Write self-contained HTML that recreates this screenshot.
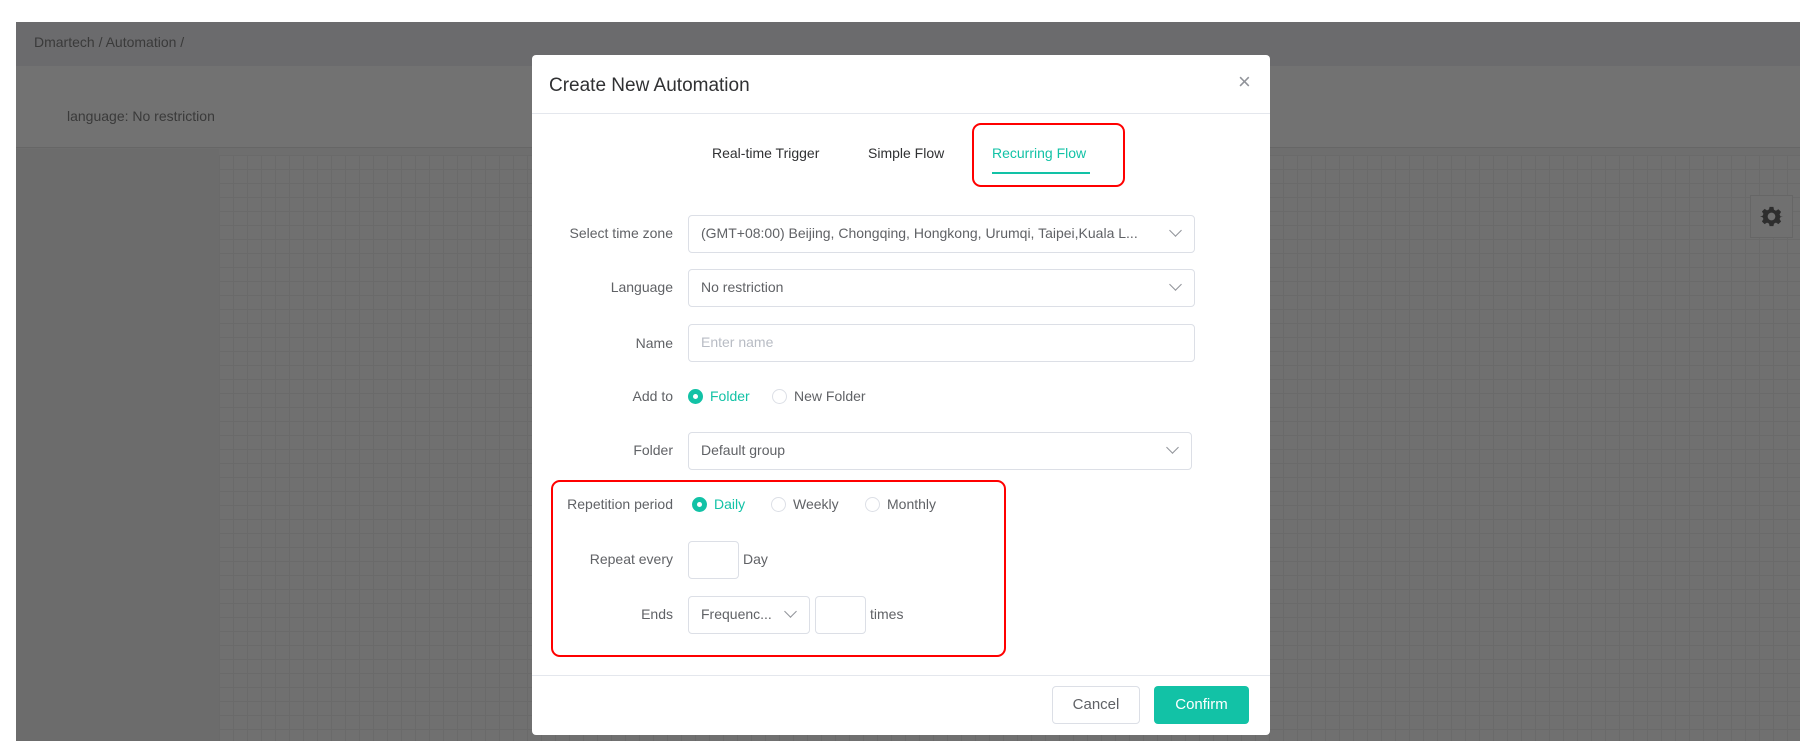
<!DOCTYPE html>
<html><head><meta charset="utf-8"><style>
*{margin:0;padding:0;box-sizing:border-box}
body{width:1810px;height:756px;background:#fff;position:relative;overflow:hidden;font-family:"Liberation Sans",Arial,sans-serif;font-size:14px;color:#606266}
.a{position:absolute}
.grid{background-color:#707070;background-image:linear-gradient(#6a6a6a 1px,transparent 1px),linear-gradient(90deg,#6a6a6a 1px,transparent 1px);background-size:14px 14px}
.lbl{position:absolute;right:1137px;text-align:right;white-space:nowrap;line-height:20px}
.inp{position:absolute;border:1px solid #dcdfe6;border-radius:4px;background:#fff;line-height:35px;padding-left:12px;color:#606266;white-space:nowrap;overflow:hidden}
.chev{position:absolute;width:9px;height:9px;border-right:1.5px solid #909399;border-bottom:1.5px solid #909399;transform:rotate(45deg)}
.radio{position:absolute;width:15px;height:15px;border:1px solid #dcdfe6;border-radius:50%;background:#fff}
.radio.on{border-color:#12c2a6;background:#12c2a6}
.radio.on::after{content:"";position:absolute;left:4px;top:4px;width:5px;height:5px;border-radius:50%;background:#fff}
.t{position:absolute;white-space:nowrap;line-height:20px}
.red{position:absolute;border:2.5px solid #f00;border-radius:9px}
</style></head><body>
<div class="a" style="left:16px;top:22px;width:1784px;height:719px;background:#6e6e6e"></div>
<div class="a" style="left:16px;top:22px;width:1784px;height:44px;background:#6b6b6d"></div>
<div class="t" style="left:34px;top:32px;color:#3a3a3a">Dmartech / Automation /</div>
<div class="a" style="left:16px;top:66px;width:1784px;height:82px;background:#727272;border-bottom:1px solid #666"></div>
<div class="t" style="left:67px;top:106px;color:#3a3a3a">language: No restriction</div>
<div class="a" style="left:16px;top:149px;width:203px;height:592px;background:#6c6c6c"></div>
<div class="a grid" style="left:219px;top:155px;width:1581px;height:586px"></div>
<div class="a" style="left:1750px;top:195px;width:43px;height:43px;border:1px solid #666;background:#707070"></div>
<svg class="a" style="left:1760px;top:205px" width="23" height="23" viewBox="0 0 24 24"><path fill="#2e2e2e" d="M10 2h4l.6 3 2 1 2.6-1.6 2.8 2.8L20.4 9.8l1 2.2H24v0l-2.6.6-1 2 1.6 2.6-2.8 2.8-2.6-1.6-2 1L14 22h-4l-.6-2.6-2-1-2.6 1.6L2 17.2l1.6-2.6-1-2L0 12l2.6-.6 1-2.2L2 6.8 4.8 4l2.6 1.6 2-1z"/><circle cx="12" cy="12" r="4" fill="#707070"/></svg>

<div class="a" style="left:532px;top:55px;width:738px;height:680px;background:#fff;border-radius:4px"></div>
<div class="t" style="left:549px;top:74px;font-size:19px;color:#303133;line-height:24px">Create New Automation</div>
<div class="t" style="left:1238px;top:72px;font-size:22px;color:#909399">×</div>
<div class="a" style="left:532px;top:113px;width:738px;height:1px;background:#e4e7ed"></div>

<div class="t" style="left:712px;top:143px;color:#303133">Real-time Trigger</div>
<div class="t" style="left:868px;top:143px;color:#303133">Simple Flow</div>
<div class="t" style="left:992px;top:143px;color:#12c2a6">Recurring Flow</div>
<div class="a" style="left:992px;top:172px;width:98px;height:2px;background:#12c2a6"></div>
<div class="red" style="left:972px;top:123px;width:153px;height:64px"></div>

<div class="lbl" style="top:223px">Select time zone</div>
<div class="inp" style="left:688px;top:215px;width:507px;height:38px">(GMT+08:00) Beijing, Chongqing, Hongkong, Urumqi, Taipei,Kuala L...</div>
<div class="chev" style="left:1171px;top:226px"></div>
<div class="lbl" style="top:277px">Language</div>
<div class="inp" style="left:688px;top:269px;width:507px;height:38px">No restriction</div>
<div class="chev" style="left:1171px;top:280px"></div>
<div class="lbl" style="top:333px">Name</div>
<div class="inp" style="left:688px;top:324px;width:507px;height:38px;color:#b8bcc4">Enter name</div>
<div class="lbl" style="top:386px">Add to</div>
<div class="radio on" style="left:688px;top:389px"></div>
<div class="t" style="left:710px;top:386px;color:#12c2a6">Folder</div>
<div class="radio" style="left:772px;top:389px"></div>
<div class="t" style="left:794px;top:386px">New Folder</div>
<div class="lbl" style="top:440px">Folder</div>
<div class="inp" style="left:688px;top:432px;width:504px;height:38px">Default group</div>
<div class="chev" style="left:1168px;top:443px"></div>

<div class="lbl" style="top:494px">Repetition period</div>
<div class="radio on" style="left:692px;top:497px"></div>
<div class="t" style="left:714px;top:494px;color:#12c2a6">Daily</div>
<div class="radio" style="left:771px;top:497px"></div>
<div class="t" style="left:793px;top:494px">Weekly</div>
<div class="radio" style="left:865px;top:497px"></div>
<div class="t" style="left:887px;top:494px">Monthly</div>
<div class="lbl" style="top:549px">Repeat every</div>
<div class="inp" style="left:688px;top:541px;width:51px;height:38px"></div>
<div class="t" style="left:743px;top:549px">Day</div>
<div class="lbl" style="top:604px">Ends</div>
<div class="inp" style="left:688px;top:596px;width:122px;height:38px">Frequenc...</div>
<div class="chev" style="left:786px;top:607px"></div>
<div class="inp" style="left:815px;top:596px;width:51px;height:38px"></div>
<div class="t" style="left:870px;top:604px">times</div>
<div class="red" style="left:551px;top:480px;width:455px;height:177px"></div>

<div class="a" style="left:532px;top:675px;width:738px;height:1px;background:#e4e7ed"></div>
<div class="a" style="left:1052px;top:686px;width:88px;height:38px;border:1px solid #dcdfe6;border-radius:4px;text-align:center;line-height:36px;font-size:15px;color:#606266">Cancel</div>
<div class="a" style="left:1154px;top:686px;width:95px;height:38px;background:#12c2a6;border-radius:4px;text-align:center;line-height:38px;font-size:15px;color:#fff">Confirm</div>
</body></html>
